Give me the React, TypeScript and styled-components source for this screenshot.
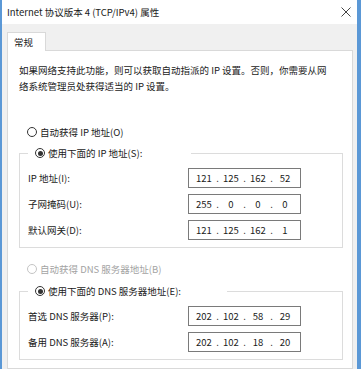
import styled, { createGlobalStyle } from "styled-components";

const GlobalStyle = createGlobalStyle`
    html, body {
        margin: 0;
        padding: 0;
        background: #ffffff;
    }
    * {
        box-sizing: border-box;
    }
`;

const Window = styled.div`
    height: 369px;
    display: flex;
    flex-direction: column;
    border-left: 2px solid #5b98d6;
    border-right: 4px solid #5b98d6;
    overflow: hidden;
    font-family: "Noto Sans CJK SC", "Noto Sans", sans-serif;
    font-size: 9.5px;
    color: #1a1a1a;
`;

const TitleBar = styled.div`
    height: 24px;
    flex-shrink: 0;
    display: flex;
    align-items: center;
    justify-content: space-between;
    padding: 0 4px 0 5px;
    background: #ffffff;
`;

const Title = styled.span`
    line-height: 16px;
`;

const CloseIcon = styled.svg`
    width: 10px;
    height: 10px;
    margin-right: 2px;
`;

const Body = styled.div`
    flex: 1;
    display: flex;
    flex-direction: column;
    background: #f0f0f0;
    padding: 8px 4px 0 5px;
`;

const TabStrip = styled.div`
    display: flex;
    position: relative;
    z-index: 1;
    margin-bottom: -1px;
`;

const Tab = styled.div`
    width: 39px;
    height: 19px;
    padding-left: 6px;
    line-height: 18px;
    background: #ffffff;
    border: 1px solid #d9d9d9;
    border-bottom: none;
`;

const Panel = styled.div`
    flex: 1;
    background: #ffffff;
    border: 1px solid #d9d9d9;
    padding: 11px 9px 0 11px;
    display: flex;
    flex-direction: column;
`;

const Intro = styled.p`
    margin: 0 0 30px;
    line-height: 16px;
    white-space: nowrap;
`;

const RadioRow = styled.label<{ $disabled?: boolean; $indent?: number }>`
    display: flex;
    align-items: center;
    gap: 3px;
    height: 16px;
    line-height: 16px;
    padding-left: ${p => p.$indent ?? 0}px;
    white-space: nowrap;
    color: ${p => (p.$disabled ? "#a3a3a3" : "inherit")};
`;

const RadioDot = styled.span<{ $checked?: boolean; $disabled?: boolean }>`
    width: 10px;
    height: 10px;
    border-radius: 50%;
    border: 1px solid ${p => (p.$disabled ? "#c4c4c4" : "#333333")};
    background: #ffffff;
    display: flex;
    align-items: center;
    justify-content: center;
    &::after {
        content: "";
        width: 5px;
        height: 5px;
        border-radius: 50%;
        background: #333333;
        display: ${p => (p.$checked ? "block" : "none")};
    }
`;

const Group = styled.fieldset<{ $top: number }>`
    display: block;
    margin: ${p => p.$top}px 0 0;
    padding: 7px 41px 7px 8px;
    border: 1px solid #dcdcdc;
    min-inline-size: 0;
`;

const Legend = styled.legend<{ $width: number }>`
    width: ${p => p.$width}px;
    padding: 0;
`;

const Rows = styled.div`
    display: flex;
    flex-direction: column;
    gap: 6px;
`;

const FieldRow = styled.div`
    display: grid;
    grid-template-columns: 1fr 113px;
    align-items: center;
    height: 20px;
`;

const IpBox = styled.div`
    height: 20px;
    border: 1px solid #7a7a7a;
    display: flex;
    align-items: center;
    padding: 0 4px;
    background: #ffffff;
`;

const Octet = styled.span`
    width: 22px;
    text-align: center;
`;

const Dot = styled.span`
    width: 5px;
    text-align: center;
`;

const Spacer = styled.div<{ $h: number }>`
    height: ${p => p.$h}px;
`;

function IpField({ value }: { value: string }) {
    const parts = value.split(".");
    return (
        <IpBox>
            {parts.map((part, i) => (
                <span key={i} style={{ display: "contents" }}>
                    {i > 0 && <Dot>.</Dot>}
                    <Octet>{part}</Octet>
                </span>
            ))}
        </IpBox>
    );
}

const ipRows = [
    { label: "IP 地址(I):", value: "121.125.162.52" },
    { label: "子网掩码(U):", value: "255.0.0.0" },
    { label: "默认网关(D):", value: "121.125.162.1" },
];

const dnsRows = [
    { label: "首选 DNS 服务器(P):", value: "202.102.58.29" },
    { label: "备用 DNS 服务器(A):", value: "202.102.18.20" },
];

export default function App() {
    return (
        <>
            <GlobalStyle />
            <Window>
                <TitleBar>
                    <Title>Internet 协议版本 4 (TCP/IPv4) 属性</Title>
                    <CloseIcon viewBox="0 0 10 10">
                        <path d="M0.5 0.5 L9.5 9.5 M9.5 0.5 L0.5 9.5" stroke="#444" strokeWidth="1" />
                    </CloseIcon>
                </TitleBar>
                <Body>
                    <TabStrip>
                        <Tab>常规</Tab>
                    </TabStrip>
                    <Panel>
                        <Intro>
                            如果网络支持此功能，则可以获取自动指派的 IP 设置。否则，你需要从网
                            <br />
                            络系统管理员处获得适当的 IP 设置。
                        </Intro>
                        <RadioRow $indent={8}>
                            <RadioDot />
                            自动获得 IP 地址(O)
                        </RadioRow>
                        <Group $top={5}>
                            <Legend $width={163}>
                                <RadioRow $indent={7}>
                                    <RadioDot $checked />
                                    使用下面的 IP 地址(S):
                                </RadioRow>
                            </Legend>
                            <Rows>
                                {ipRows.map(r => (
                                    <FieldRow key={r.label}>
                                        <span>{r.label}</span>
                                        <IpField value={r.value} />
                                    </FieldRow>
                                ))}
                            </Rows>
                        </Group>
                        <Spacer $h={13} />
                        <RadioRow $disabled $indent={8}>
                            <RadioDot $disabled />
                            自动获得 DNS 服务器地址(B)
                        </RadioRow>
                        <Group $top={6}>
                            <Legend $width={199}>
                                <RadioRow $indent={7}>
                                    <RadioDot $checked />
                                    使用下面的 DNS 服务器地址(E):
                                </RadioRow>
                            </Legend>
                            <Rows>
                                {dnsRows.map(r => (
                                    <FieldRow key={r.label}>
                                        <span>{r.label}</span>
                                        <IpField value={r.value} />
                                    </FieldRow>
                                ))}
                            </Rows>
                        </Group>
                    </Panel>
                </Body>
            </Window>
        </>
    );
}
